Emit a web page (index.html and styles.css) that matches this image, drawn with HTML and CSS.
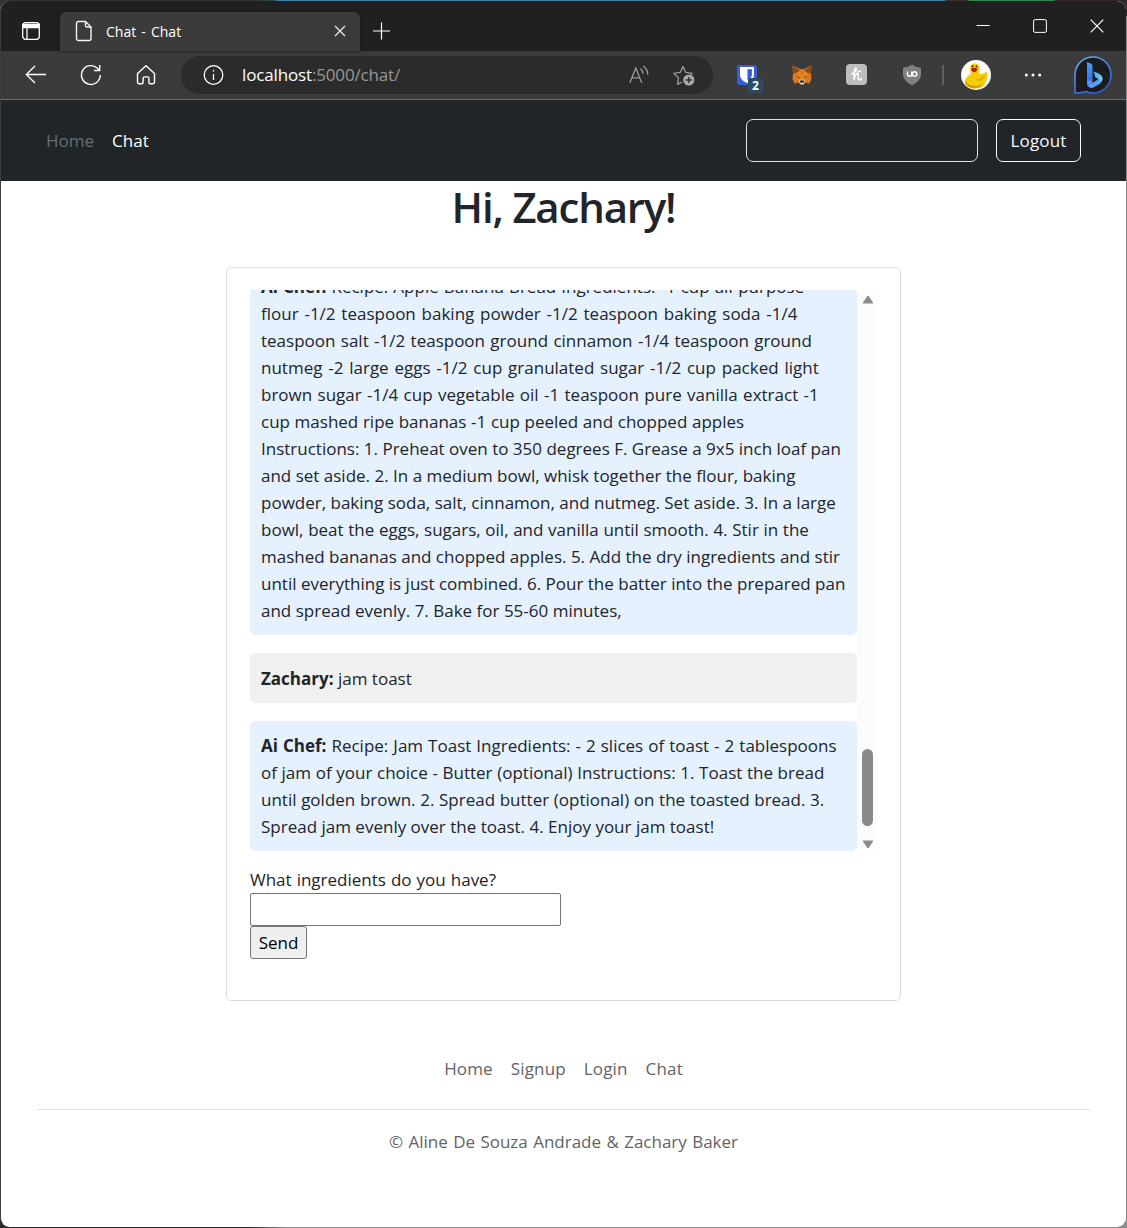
FILE: index.html
```html
<!DOCTYPE html>
<html lang="en">
<head>
<meta charset="utf-8">
<title>Chat - Chat</title>
<link rel="stylesheet" href="styles.css">
</head>
<body>
<div class="window">
  <div class="tabbar">
    <div class="tab-actions"><svg width="20" height="20" viewBox="0 0 20 20" fill="none" stroke="#fff" stroke-width="1.3"><rect x="1.7" y="1.7" width="16.6" height="16.6" rx="3"/><path d="M2 3.5h16v3H2z" fill="#fff"/><path d="M6 6v12"/></svg></div>
    <div class="tab">
      <svg width="18" height="22" viewBox="0 0 18 22" fill="none" stroke="#f4f4f4" stroke-width="1.4"><path d="M3.5 1.5h7l5.500 5.500v11.500a2 2 0 0 1-2 2H3.500a2 2 0 0 1-2-2V3.500a2 2 0 0 1 2-2zM10.500 1.500v4a1.500 1.500 0 0 0 1.500 1.500h4"/></svg>
      <span class="tab-title">Chat - Chat</span>
      <svg width="12" height="12" viewBox="0 0 12 12" stroke="#eee" stroke-width="1.2"><path d="M1 1l10 10M11 1L1 11"/></svg>
    </div>
    <svg class="new-tab" width="18" height="18" viewBox="0 0 18 18" stroke="#fff" stroke-width="1.2"><path d="M8.500 .5v17M0 9h17"/></svg>
    <div class="controls">
      <svg width="14" height="14" viewBox="0 0 14 14" stroke="#fff"><path d="M.5 6.500h13"/></svg>
      <svg width="14" height="14" viewBox="0 0 14 14" fill="none" stroke="#fff"><rect x=".6" y=".6" width="12.800" height="12.800" rx="1.500"/></svg>
      <svg width="14" height="14" viewBox="0 0 14 14" stroke="#fff" stroke-width="1.200"><path d="M.7 .7l12.600 12.600M13.300 .7L.7 13.300"/></svg>
    </div>
  </div>
  <div class="toolbar">
    <div class="slot"><svg width="22" height="20" viewBox="0 0 22 20" fill="none" stroke="#fff" stroke-width="1.300"><path d="M21 9.500H1.500M10 1L1.300 9.500 10 18"/></svg></div>
    <div class="slot"><svg width="22" height="22" viewBox="0 0 22 22" fill="none" stroke="#fff" stroke-width="1.400"><path d="M20.300 11A9.400 9.400 0 1 1 17.500 4.300L19.500 6.300M19.700 1v5.500h-5.700"/></svg></div>
    <div class="slot"><svg width="20" height="22" viewBox="0 0 20 22" fill="none" stroke="#fff" stroke-width="1.400" stroke-linejoin="round"><path d="M1.500 9.500L10 1.800l8.500 7.700V18a1.700 1.700 0 0 1-1.700 1.700h-2.600a1.300 1.300 0 0 1-1.300-1.300v-4a1.500 1.500 0 0 0-1.500-1.500H8.600a1.500 1.500 0 0 0-1.500 1.500v4a1.300 1.300 0 0 1-1.300 1.300H3.200A1.700 1.700 0 0 1 1.500 18z"/></svg></div>
    <div class="address">
      <svg width="22" height="22" viewBox="0 0 22 22" fill="none" stroke="#fff" stroke-width="1.300"><circle cx="11.500" cy="11" r="9.300"/><path d="M11.500 10v6"/><circle cx="11.500" cy="6.800" r=".6" fill="#fff" stroke-width=".6"/></svg>
      <span class="url"><b>localhost</b>:5000/chat/</span>
      <svg class="read" width="20" height="20" viewBox="0 0 20 20" fill="none" stroke="#9a9a9a" stroke-width="1.300"><path d="M.8 18L6.800 3l6 15M3 12.800h7.700M11.300 3.500q2.600 2 2.700 5.300M14.300 1q4.400 3.300 4.500 8.800"/></svg>
      <svg width="24" height="24" viewBox="0 0 24 24" fill="none" stroke="#9a9a9a" stroke-width="1.300" stroke-linejoin="round"><path d="M10 19l-4.500 2.300 1-6.400L1.800 10.300l6.400-.9L11 3.400l2.800 6 6.400.9-1.200 1.300"/><circle cx="16.800" cy="17" r="5.600" fill="#a9a9a9" stroke="none"/><path d="M16.800 14v6M13.800 17h6" stroke="#2b2b2b" stroke-width="1.400"/></svg>
    </div>
    <div class="extensions">
      <div class="slot vault"><svg width="20" height="20" viewBox="0 0 20 20"><rect width="20" height="20" rx="2.500" fill="#345ddb"/><path d="M3 2h14v8.500q-.5 4.500-7 7.500-6.500-3-7-7.500z" fill="#fff"/><path d="M10.500 4.200h4.400V10q-.3 3-4.400 5.200z" fill="#345ddb"/></svg><span class="badge">2</span></div>
      <div class="slot"><svg width="20" height="20" viewBox="0 0 20 20"><path d="M.5.5L8 4h4L19.500.5 19 9l.5 5-2 4.500-4.500-1-1.500 2h-3L7 17.500l-4.500 1L.5 14 1 9z" fill="#d9781d"/><path d="M.5.5L8 5.500 4.500 8 1 8.500zM19.500.5L12 5.500 15.500 8l3.500.5z" fill="#8b4b19"/><path d="M4.500 8L8 5.500 10 12l2-6.500L15.500 8l-1 6-2 2h-5l-2-2z" fill="#e38423"/><path d="M4.800 11l3.400 1.500-1.500.6zM15.200 11l-3.400 1.500 1.500.6z" fill="#2b3845"/><path d="M7 15.500l1.500-1h3l1.500 1-.5 3-1.500 1H9l-1.500-1z" fill="#d8c4b0"/><path d="M8.200 15.500h3.600l.3 2H7.900z" fill="#18222b"/></svg></div>
      <div class="slot"><svg width="21" height="21" viewBox="0 0 21 21"><rect width="21" height="21" rx="4" fill="#bdbdbd"/><path d="M5.500 10C9.500 9 11.300 4.800 10 4.200 8.300 3.800 8 9 8 16.300c.3-5.600 3.800-8.300 4.300-5.600.2 2-.8 5.300.9 5.300 1.100 0 1.800-.8 2.200-1.600M11.500 8l3-.9" fill="none" stroke="#fff" stroke-width="1.500" stroke-linecap="round"/></svg></div>
      <div class="slot"><svg width="20" height="22" viewBox="0 0 20 22"><path d="M10 .8Q14 3.500 19 3.700V11q-.5 6-9 10.300Q1.500 17 1 11V3.700Q6 3.500 10 .8z" fill="#808080"/><path d="M5.500 7.500v2.700a2 2 0 0 0 4.200 0V7.500" fill="none" stroke="#fff" stroke-width="1.400"/><circle cx="12.600" cy="9.900" r="2.200" fill="none" stroke="#fff" stroke-width="1.400"/></svg></div>
    </div>
    <div class="divider"></div>
    <div class="slot avatar"><svg width="30" height="30" viewBox="0 0 30 30"><circle cx="15" cy="15" r="15" fill="#fff"/><path d="M9 8a5 5 0 1 1 9.500 2.500c-1 2.500-.5 4 2 3.500 2.500-.3 3-2 5.500-2.300 1.500 4.300-.5 12.500-5 15.300-5 2.500-12 2-15.500-1.500-4-5 .5-9 4.500-12C9.500 11.500 9 9.500 9 8z" fill="#f5cd05"/><path d="M4 20c2 6 13 8 19 3-4 5-7 5.500-11 5.200C6 27.500 3.500 24 4 20z" fill="#d79b00"/><path d="M14 18c4 3 7-1 10-3-1 6-7 8-10 3z" fill="#e2ad00"/><path d="M10 8.500q3-1.500 6.500.3-1 3.700-3.300 3.500Q10.500 12 10 8.500z" fill="#b5201c"/><circle cx="11.500" cy="6.300" r="1" fill="#302c10"/><circle cx="15.500" cy="6.500" r="1" fill="#302c10"/></svg></div>
    <div class="slot dots"><svg width="18" height="6" viewBox="0 0 18 6" fill="#fff"><circle cx="2.300" cy="3" r="1.500"/><circle cx="9" cy="3" r="1.500"/><circle cx="15.700" cy="3" r="1.500"/></svg></div>
    <div class="bing"><svg width="39" height="40" viewBox="0 0 39 40"><defs><linearGradient id="ring" x1="0" y1="0" x2=".6" y2="1"><stop stop-color="#62bdec"/><stop offset="1" stop-color="#365bd9"/></linearGradient><linearGradient id="mark" x1="0" y1="0" x2="0" y2="1"><stop stop-color="#45a4f4"/><stop offset=".7" stop-color="#3972f0"/><stop offset="1" stop-color="#87c9fb"/></linearGradient><linearGradient id="leaf"><stop stop-color="#397ff0"/><stop offset="1" stop-color="#62dff0"/></linearGradient></defs><path d="M2 38V20A18 18 0 1 1 20 38q-4 0-7-1.500Q8 38.300 2 38z" fill="#1c1c1e" stroke="url(#ring)" stroke-width="1.600"/><path d="M14 7l4 1.800q1.500.8 1.500 2.500v15l-3 5q-2.500-1-2.500-3.500z" fill="url(#mark)"/><path d="M19.500 27.800l6-3.300q-1.500-1.800-3-2l-2.200-6q6.500 2 8.200 4.300 2.800 4-1.500 7.700l-8 4.300q-3.500 0-5-3.800z" fill="url(#leaf)"/><path d="M14.200 29q1.300 2.300 5-.8l7-4q2.300 1.300.8 4.300l-6.800 4q-4.700 1.500-6-3.500z" fill="#559ff7"/></svg></div>
  </div>

  <div class="page">
    <nav class="navbar">
      <a class="muted">Home</a><a>Chat</a>
      <div class="nav-field"></div>
      <button class="logout">Logout</button>
    </nav>
    <h1>Hi, Zachary!</h1>
    <main class="card">
      <div class="chat">
        <div class="messages">
          <p class="message bot"><span class="loose"><strong>Ai Chef:</strong> Recipe: Apple Banana Bread Ingredients: -1 cup all-purpose</span><br>
            <span class="loosest">flour -1/2 teaspoon baking powder -1/2 teaspoon baking soda -1/4</span><br>
            <span class="looser">teaspoon salt -1/2 teaspoon ground cinnamon -1/4 teaspoon ground</span><br>
            <span class="loosest">nutmeg -2 large eggs -1/2 cup granulated sugar -1/2 cup packed light</span><br>
            <span class="looser">brown sugar -1/4 cup vegetable oil -1 teaspoon pure vanilla extract -1</span><br>
            <span class="open">cup mashed ripe bananas -1 cup peeled and chopped apples</span><br>
            Instructions: 1. Preheat oven to 350 degrees F. Grease a 9x5 inch loaf pan<br>
            and set aside. 2. In a medium bowl, whisk together the flour, baking<br>
            powder, baking soda, salt, cinnamon, and nutmeg. Set aside. 3. In a large<br>
            <span class="open">bowl, beat the eggs, sugars, oil, and vanilla until smooth. 4. Stir in the</span><br>
            mashed bananas and chopped apples. 5. Add the dry ingredients and stir<br>
            until everything is just combined. 6. Pour the batter into the prepared pan<br>
            and spread evenly. 7. Bake for 55-60 minutes,</p>
          <p class="message user"><strong>Zachary:</strong> jam toast</p>
          <p class="message bot"><span class="loose"><strong>Ai Chef:</strong> Recipe: Jam Toast Ingredients: - 2 slices of toast - 2 tablespoons</span><br>
            <span class="open">of jam of your choice - Butter (optional) Instructions: 1. Toast the bread</span><br>
            <span class="open">until golden brown. 2. Spread butter (optional) on the toasted bread. 3.</span><br>
            Spread jam evenly over the toast. 4. Enjoy your jam toast!</p>
        </div>
        <div class="scrollbar">
          <svg width="12" height="9" viewBox="0 0 12 9"><path d="M6 1l4.800 7H1.200z" fill="#8a8a8a" stroke="#8a8a8a" stroke-linejoin="round"/></svg>
          <div class="thumb"></div>
          <svg width="12" height="9" viewBox="0 0 12 9"><path d="M6 8l4.800-7H1.200z" fill="#8a8a8a" stroke="#8a8a8a" stroke-linejoin="round"/></svg>
        </div>
      </div>
      <form>
        <label class="loose" for="ingredients">What ingredients do you have?</label>
        <input id="ingredients" type="text">
        <button class="send" type="button">Send</button>
      </form>
    </main>
    <footer>
      <div class="links"><a>Home</a><a>Signup</a><a>Login</a><a>Chat</a></div>
      <p class="looser">© Aline De Souza Andrade &amp; Zachary Baker</p>
    </footer>
  </div>
</div>
</body>
</html>
```
FILE: styles.css
```css
* { box-sizing: border-box; }
body {
  margin: 0;
  height: 1228px;
  overflow: hidden;
  padding-top: 1px;
  background: linear-gradient(90deg, #343434 260px, #2f5265 276px, #3f80a0 277px 945px, #3b3032 946px 968px, #35894c 969px 1054px, #33282a 1055px) top / 100% 16px no-repeat, linear-gradient(90deg, #2b2b2d 250px, #8d8d8d 285px);
  color: #212529;
  font: 17px/27px "Open Sans", "Noto Sans", sans-serif;
}
svg { display: block; flex: none; }
.window {
  height: 1226px;
  margin-right: 1px;
  border-left: 1px solid #3d3d3f;
  border-radius: 9px;
  overflow: hidden;
  background: #fff;
}
.tabbar { display: flex; height: 50px; background: #202020; }
.tab-actions { width: 59px; padding: 20px 0 0 20px; }
.tab {
  display: flex;
  align-items: center;
  width: 300px;
  height: 39px;
  margin-top: 11px;
  padding: 0 14px 1px 15px;
  border-radius: 6px 6px 0 0;
  background: #3b3b3b;
  box-shadow: 0 0 3px #151515;
  color: #fff;
  font-size: 14px;
}
.tab-title { flex: 1; margin-left: 13px; word-spacing: 1.5px; }
.new-tab { margin: 21px 0 0 13px; }
.controls { display: flex; gap: 43px; margin: 17px 22px 0 auto; padding-top: 1px; }
.toolbar {
  display: flex;
  align-items: center;
  height: 49px;
  padding: 0 14px 1px 7px;
  border-bottom: 1px solid #6c6c6e;
  background: #3b3b3b;
}
.slot { display: flex; justify-content: center; align-items: center; flex: none; width: 55px; height: 38px; }
.address {
  display: flex;
  align-items: center;
  width: 532px;
  height: 38px;
  margin-left: 8px;
  padding: 0 17px 0 21px;
  border-radius: 19px;
  background: #2b2b2b;
}
.url { flex: 1; margin-left: 18px; color: #979797; letter-spacing: -.15px; }
.url b { color: #fff; font-weight: 400; }
.read { margin-right: 23px; }
.extensions { display: flex; margin-left: 6px; }
.vault { position: relative; }
.badge {
  position: absolute;
  left: 29px;
  top: 22px;
  width: 15px;
  height: 15px;
  border-radius: 2px;
  background: #2d4a60;
  color: #fff;
  font-size: 12px;
  font-weight: 700;
  line-height: 15px;
  text-align: center;
}
.divider { width: 2px; height: 20px; margin-left: 3px; background: #606060; }
.avatar { margin-left: 4px; }
.dots { margin-left: 2px; }
.bing { margin-left: auto; }

.navbar {
  display: flex;
  align-items: center;
  gap: 18px;
  height: 81px;
  padding: 0 45px;
  background: #212529;
  color: #fff;
}
.muted { color: #686d72; }
.nav-field { width: 232px; height: 43px; margin-left: auto; border: 1px solid #dee2e6; border-radius: 7px; }
.logout {
  width: 85px;
  height: 43px;
  padding: 0;
  border: 1px solid #f8f9fa;
  border-radius: 7px;
  background: none;
  color: #f8f9fa;
  font: inherit;
  letter-spacing: .15px;
}
h1 { margin: 0; padding-bottom: 3px; font-size: 42px; line-height: 52px; font-weight: 600; text-align: center; letter-spacing: -1.2px; }
.card {
  width: 675px;
  height: 734px;
  margin: 31px auto 0;
  padding: 22px;
  border: 1px solid #dedede;
  border-radius: 5px;
}
.chat { display: flex; width: 629px; height: 564px; margin-left: 1px; overflow: hidden; }
/* The list is scrolled, so the first message starts above the visible area. */
.messages { width: 607px; margin-top: -28px; }
.message { margin: 0 0 18px; padding: 11px; border-radius: 5px; white-space: nowrap; }
.user { padding: 12px 11px 11px; background: #f0f0f0; }
.bot { background: #e5f1ff; }
.open { word-spacing: .22px; }
.loose { word-spacing: .6px; }
.looser { word-spacing: .95px; }
.loosest { word-spacing: 1.38px; }
.scrollbar {
  display: flex;
  flex-direction: column;
  align-items: center;
  width: 21px;
  padding: 5px 0;
  background: #fcfcfc;
}
.thumb { width: 11px; height: 77px; margin: auto 0 14px; border-radius: 6px; background: #8a8a8a; }
form { display: flex; flex-direction: column; align-items: flex-start; margin: 12px 0 0 1px; }
form input { width: 311px; height: 33px; border: 1px solid #767676; border-radius: 2px; }
.send {
  width: 57px;
  height: 33px;
  padding: 0;
  border: 1px solid #767676;
  border-radius: 3px;
  background: #efefef;
  color: #000;
  font: inherit;
}
footer { margin: 54px 36px 0; color: #5f6367; text-align: center; }
.links { display: flex; justify-content: center; gap: 18px; padding-bottom: 27px; border-bottom: 1px solid #dee2e6; letter-spacing: .15px; }
footer p { margin: 18px 0 0; }
```
